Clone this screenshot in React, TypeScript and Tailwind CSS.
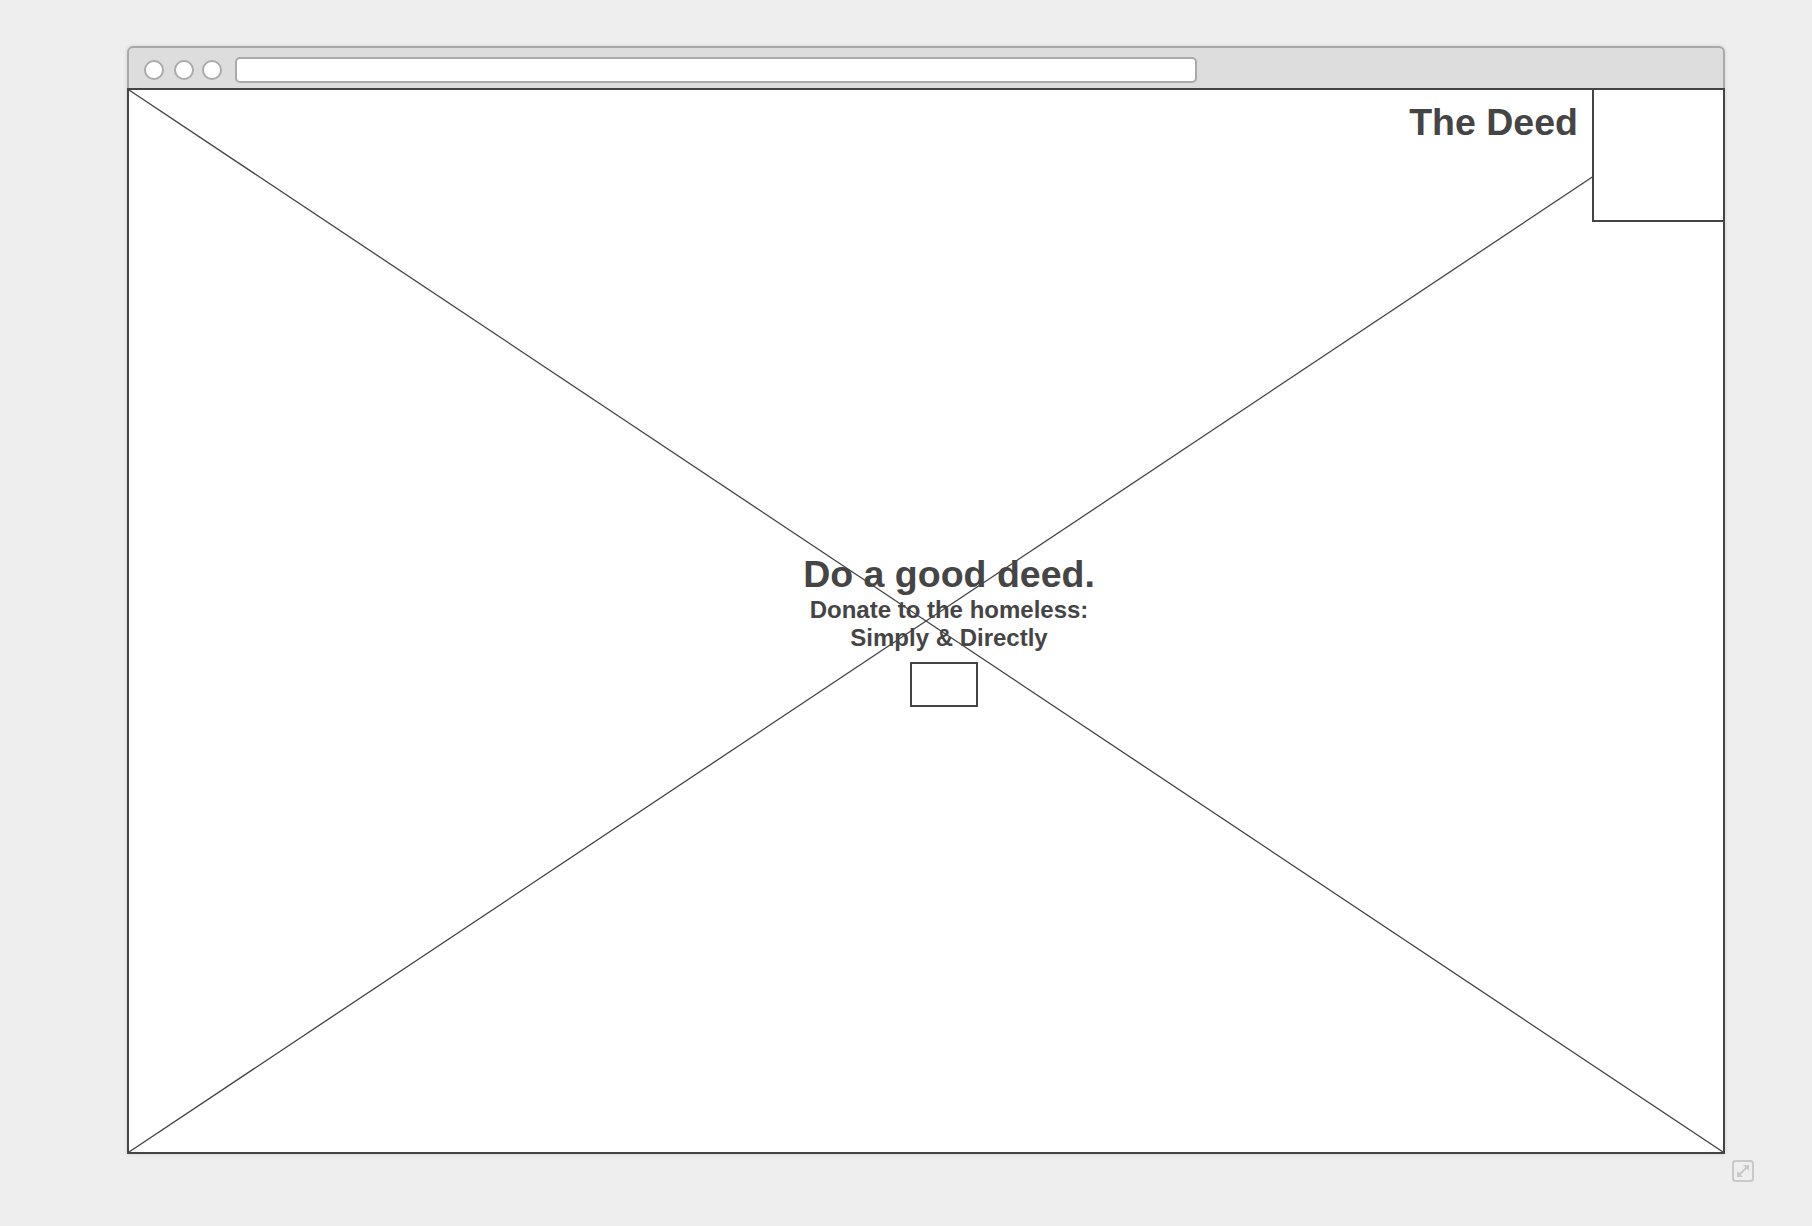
import React from "react";

function ResizeIcon() {
  return (
    <svg width="22" height="22" viewBox="0 0 22 22" fill="none">
      <rect x="1" y="1" width="20" height="20" rx="2.5" stroke="#c9c9c9" strokeWidth="2" />
      <line x1="7" y1="15" x2="15" y2="7" stroke="#c9c9c9" strokeWidth="2" />
      <polygon points="17,5 11,5 17,11" fill="#c9c9c9" />
      <polygon points="5,17 5,11 11,17" fill="#c9c9c9" />
    </svg>
  );
}

export default function App() {
  return (
    <div className="w-[1812px] h-[1226px] bg-[#eeeeee] pt-[46px] pl-[127px] font-['Liberation_Sans',Arial,sans-serif] text-[#454545]">
      <div className="w-[1627px] flex flex-col">
        <div className="w-[1598px] flex flex-col shadow-[0_0_4px_rgba(0,0,0,0.12)] rounded-t-[6px]">
          {/* title bar */}
          <div className="h-[42px] bg-[#dddddd] border-2 border-b-0 border-[#a9a9a9] rounded-t-[6px] flex items-center pl-[15px] pt-[4px]">
            <div className="w-[20px] h-[20px] rounded-full bg-white border-2 border-[#aaaaaa]" />
            <div className="w-[20px] h-[20px] rounded-full bg-white border-2 border-[#aaaaaa] ml-[10px]" />
            <div className="w-[20px] h-[20px] rounded-full bg-white border-2 border-[#aaaaaa] ml-[8px]" />
            <div className="w-[962px] h-[26px] bg-white border-2 border-[#aaaaaa] rounded-[5px] ml-[13px]" />
          </div>
          {/* content */}
          <div className="relative h-[1066px] bg-white border-2 border-[#444444]">
            <svg className="absolute inset-0" width="1594" height="1062" viewBox="0 0 1594 1062">
              <line x1="0" y1="0" x2="1594" y2="1062" stroke="#444444" strokeWidth="1.3" />
              <line x1="0" y1="1062" x2="1594" y2="0" stroke="#444444" strokeWidth="1.3" />
            </svg>
            <div className="relative flex flex-col">
              <div className="flex justify-end items-start">
                <div className="pt-[14px] mr-[14px] text-[37.5px] leading-none font-bold">The Deed</div>
                <div className="w-[131px] h-[132px] bg-white border-l-2 border-b-2 border-[#444444]" />
              </div>
              <div className="mt-[334px] flex flex-col items-center pl-[46px]">
                <div className="text-[37.5px] leading-none font-bold">Do a good deed.</div>
                <div className="mt-[2px] text-[24px] leading-[28px] font-bold text-center">
                  Donate to the homeless:
                  <br />
                  Simply &amp; Directly
                </div>
                <div className="mt-[10px] ml-[-10px] w-[68px] h-[45px] bg-white border-2 border-[#444444]" />
              </div>
            </div>
          </div>
        </div>
        <div className="flex justify-end mt-[6px]">
          <ResizeIcon />
        </div>
      </div>
    </div>
  );
}
